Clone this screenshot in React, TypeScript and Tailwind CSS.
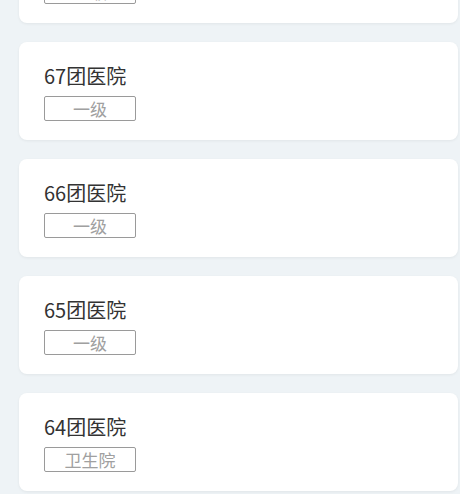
const hospitals = [
  { name: "68团医院", level: "一级" },
  { name: "67团医院", level: "一级" },
  { name: "66团医院", level: "一级" },
  { name: "65团医院", level: "一级" },
  { name: "64团医院", level: "卫生院" },
];

function HospitalCard({ name, level }: { name: string; level: string }) {
  return (
    <div className="bg-white rounded-[8px] shadow-[0_1px_3px_rgba(0,0,0,0.06)] pl-[25px] pr-4 pt-[20px] pb-[19px]">
      <div className="text-[20px] leading-[28px] text-[#333333]">{name}</div>
      <div className="mt-[6px] w-[92px] h-[25px] border border-[#9a9a9a] rounded-[2px] flex items-center justify-center text-[17px] leading-none text-[#a0a0a0]">
        {level}
      </div>
    </div>
  );
}

export default function App() {
  return (
    <div
      className="w-[460px] h-[494px] overflow-hidden bg-[#eef3f6]"
      style={{ fontFamily: '"Segoe UI", "Noto Sans CJK SC", sans-serif' }}
    >
      <div className="-mt-[75px] ml-[19px] mr-[2px] flex flex-col gap-[19px]">
        {hospitals.map((h, i) => (
          <HospitalCard key={i} name={h.name} level={h.level} />
        ))}
      </div>
    </div>
  );
}
